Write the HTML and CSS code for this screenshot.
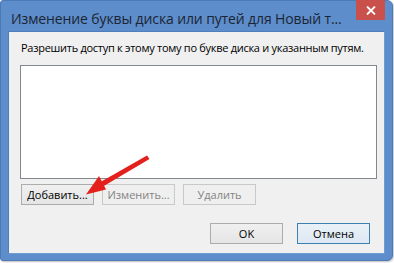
FILE: index.html
```html
<!DOCTYPE html>
<html lang="ru">
<head>
<meta charset="utf-8">
<title>Изменение буквы диска</title>
<link rel="stylesheet" href="styles.css">
</head>
<body>
<div class="window">
  <div class="titlebar">
    <div class="title">Изменение буквы диска или путей для Новый т...</div>
    <div class="close">
      <svg width="10" height="9" viewBox="0 0 10 9"><path d="M1 0.5 L9 8.5 M9 0.5 L1 8.5" stroke="#fff" stroke-width="1.8" fill="none"/></svg>
    </div>
  </div>
  <div class="content">
    <div class="label">Разрешить доступ к этому тому по букве диска и указанным путям.</div>
    <div class="listbox"></div>
    <div class="row">
      <button class="btn">Добавить...</button>
      <button class="btn disabled">Изменить...</button>
      <button class="btn disabled">Удалить</button>
    </div>
    <div class="row bottom">
      <button class="btn">OK</button>
      <button class="btn default">Отмена</button>
    </div>
  </div>
</div>
<svg class="arrow" width="394" height="263" viewBox="0 0 394 263">
  <path d="M147 155.5 L149.5 159 L103 186.5 L100.5 182 Z" fill="#e3201c"/>
  <path d="M86 194.5 L99 176 L106 189.5 Z" fill="#e3201c"/>
</svg>
</body>
</html>
```
FILE: styles.css
```css
html, body {
  margin: 0;
  padding: 0;
  background: #ffffff;
}
body {
  width: 394px;
  height: 263px;
  position: relative;
  overflow: hidden;
  font-family: "Open Sans", "Noto Sans", "Liberation Sans", sans-serif;
}
.window {
  box-sizing: border-box;
  width: 393px;
  height: 261px;
  background: #5d8dcb;
  border: 1px solid #4c7ab5;
  border-radius: 3px 6px 6px 3px;
  display: flex;
  flex-direction: column;
  box-shadow: 1px 1px 2px rgba(0,0,0,0.25);
}
.titlebar {
  height: 30px;
  display: flex;
  align-items: flex-start;
}
.title {
  margin-left: 10px;
  margin-top: 8px;
  font-size: 14px;
  line-height: 20px;
  color: #1b2533;
  white-space: nowrap;
  letter-spacing: -0.12px;
}
.close {
  margin-left: auto;
  margin-right: 7px;
  width: 29px;
  height: 20px;
  margin-top: -1px;
  flex: none;
  background: #c9504b;
  display: flex;
  align-items: center;
  justify-content: center;
}
.content {
  flex: 1;
  margin: 0 7px 6px 7px;
  background: #f0f0f0;
  border: 1px solid #4f7fbb;
  border-right-color: #6f9bd2;
  border-bottom-color: #6f9bd2;
  display: flex;
  flex-direction: column;
  padding: 0 8px 0 11px;
}
.label {
  margin-top: 8px;
  margin-left: 1px;
  font-size: 11px;
  line-height: 16px;
  letter-spacing: -0.28px;
  color: #000;
  white-space: nowrap;
}
.listbox {
  margin-top: 9px;
  width: 357px;
  height: 114px;
  box-sizing: border-box;
  background: #fff;
  border: 1px solid #828790;
}
.row {
  display: flex;
  gap: 8px;
  margin-top: 5px;
  margin-left: 1px;
}
.row.bottom {
  margin-top: 18px;
  margin-left: 190px;
  gap: 14px;
}
.btn {
  box-sizing: border-box;
  width: 73px;
  height: 21px;
  padding: 0;
  margin: 0;
  font-family: inherit;
  font-size: 11px;
  line-height: 19px;
  color: #000;
  background: linear-gradient(#f0f0f0, #e5e5e5);
  border: 1px solid #acacac;
  border-radius: 0;
}
.btn.disabled {
  color: #838383;
  background: #efefef;
  border-color: #c9c9c9;
}
.btn.default {
  border-color: #3c7fb1;
  background: linear-gradient(#eaf1f8, #dde8f3);
}
.arrow {
  position: absolute;
  left: 0;
  top: 0;
  pointer-events: none;
}
```
